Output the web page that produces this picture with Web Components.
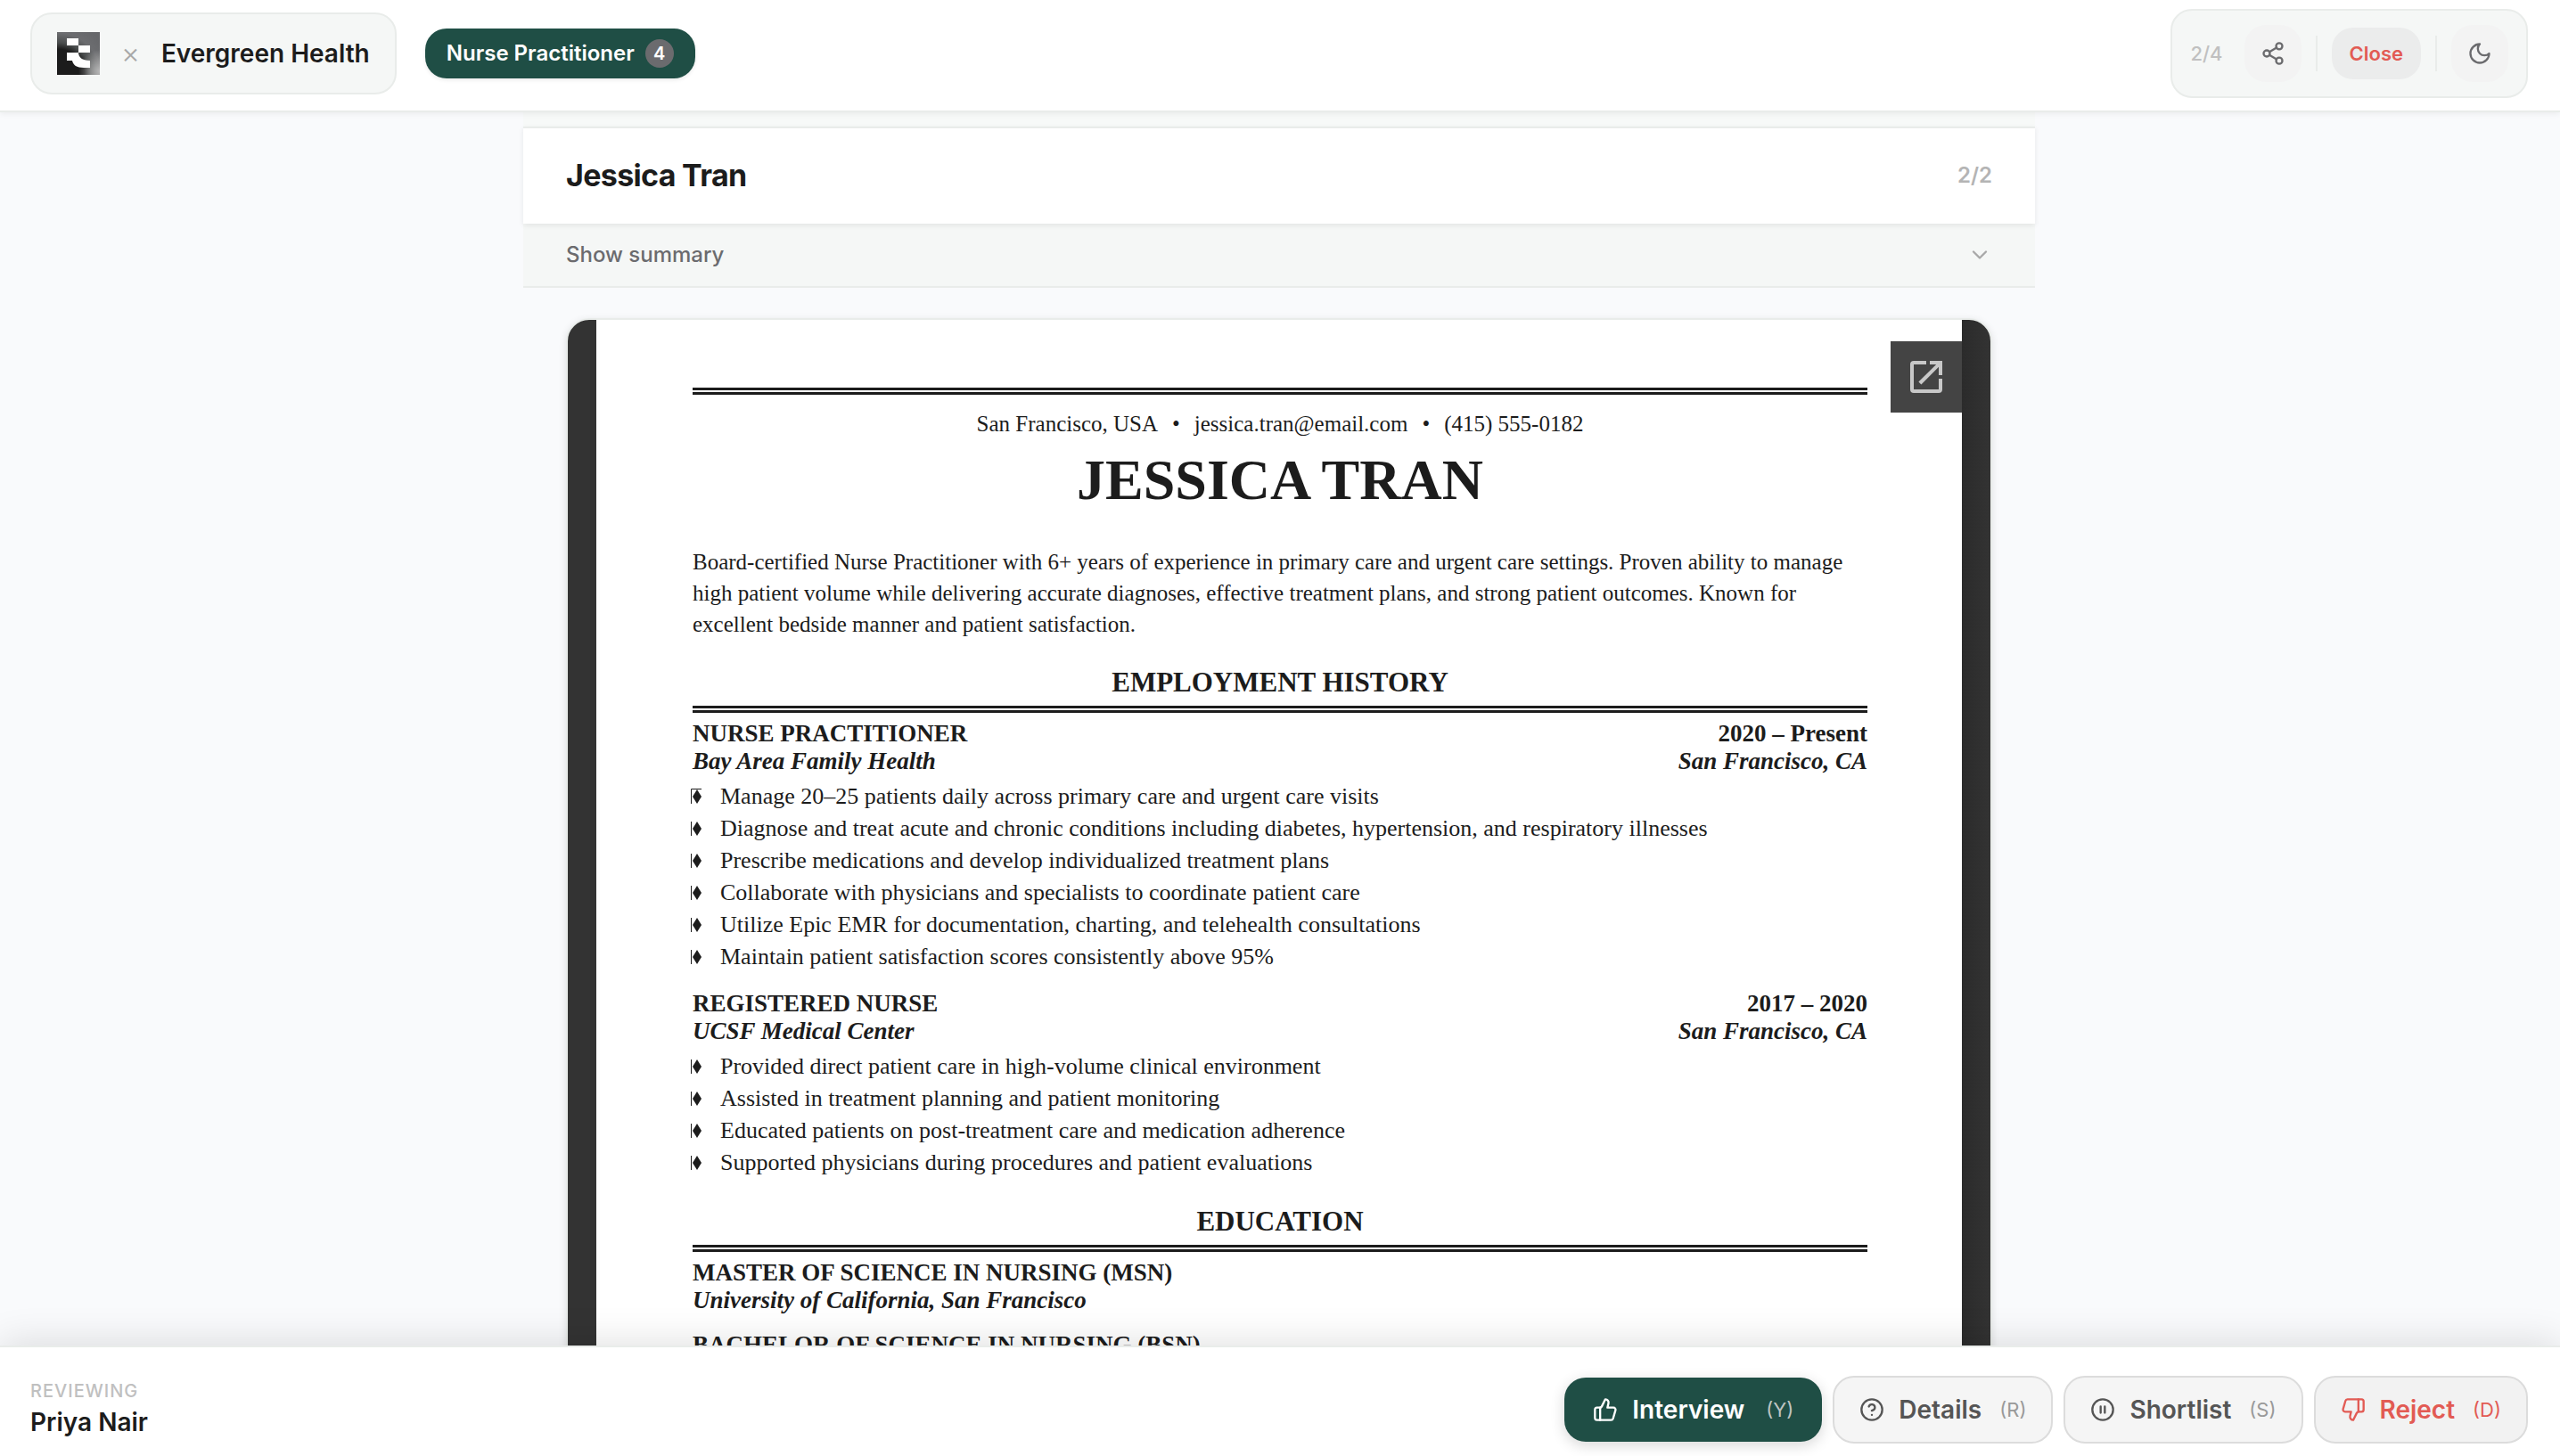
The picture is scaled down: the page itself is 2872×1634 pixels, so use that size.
<!DOCTYPE html>
<html lang="en">
<head>
<meta charset="utf-8">
<title>Evergreen Health – Nurse Practitioner</title>
<style>
  html, body { margin: 0; height: 100%; }
  body {
    font-family: Inter, "Liberation Sans", sans-serif;
    color: #1c1c1c;
    background: #f9fafc;
    --ink: #1c1c1c;
    --green: #1f4e45;
    --red: #e25b54;
    --muted: #c0c0c0;
    --surface: #f5f7f6;
    --line: #e9ecea;
  }
</style>
</head>
<body>
<review-app></review-app>

<script>
const ICONS = {
  share: '<circle cx="18" cy="5" r="3"/><circle cx="6" cy="12" r="3"/><circle cx="18" cy="19" r="3"/><path d="M8.59 13.51l6.83 3.98M15.41 6.51l-6.82 3.98"/>',
  moon: '<path d="M12 3a6 6 0 0 0 9 9 9 9 0 1 1-9-9Z"/>',
  chevron: '<path d="m6 9 6 6 6-6"/>',
  up: '<path d="M7 10v12"/><path d="M15 5.88 14 10h5.83a2 2 0 0 1 1.92 2.56l-2.33 8A2 2 0 0 1 17.5 22H4a2 2 0 0 1-2-2v-8a2 2 0 0 1 2-2h2.76a2 2 0 0 0 1.79-1.11L12 2a3.13 3.13 0 0 1 3 3.88Z"/>',
  down: '<path d="M17 14V2"/><path d="M9 18.12 10 14H4.17a2 2 0 0 1-1.92-2.56l2.33-8A2 2 0 0 1 6.5 2H20a2 2 0 0 1 2 2v8a2 2 0 0 1-2 2h-2.76a2 2 0 0 0-1.79 1.11L12 22a3.13 3.13 0 0 1-3-3.88Z"/>',
  help: '<circle cx="12" cy="12" r="10"/><path d="M9.09 9a3 3 0 0 1 5.83 1c0 2-3 3-3 3M12 17h.01"/>',
  pause: '<circle cx="12" cy="12" r="10"/><path d="M10 15V9M14 15V9"/>'
};

function define(name, html, setup) {
  const template = document.createElement('template');
  template.innerHTML = html;
  customElements.define(name, class extends HTMLElement {
    connectedCallback() {
      if (this.shadowRoot) return;
      const root = this.attachShadow({ mode: 'open' });
      root.append(template.content.cloneNode(true));
      if (setup) setup(this, root);
    }
  });
}

define('line-icon', `
  <style>
    :host { display: block; flex: none; width: 28px; height: 28px; }
    svg { display: block; width: 100%; height: 100%; fill: none; stroke: currentColor; stroke-width: 2; stroke-linecap: round; stroke-linejoin: round; }
  </style>
  <svg viewBox="0 0 24 24" aria-hidden="true"></svg>`,
  (host, root) => { root.querySelector('svg').innerHTML = ICONS[host.getAttribute('name')]; });

define('brand-card', `
  <style>
    :host { display: flex; align-items: center; gap: 24px; box-sizing: border-box; height: 92px; padding: 0 28px; border: 2px solid var(--line); border-radius: 24px; background: var(--surface); }
    svg { display: block; width: 48px; height: 48px; }
    .times { font-size: 32px; line-height: 32px; font-weight: 300; color: #a8a8a8; }
    .name { font-size: 28px; line-height: 36px; font-weight: 600; }
  </style>
  <svg viewBox="0 0 48 48" aria-hidden="true">
    <defs>
      <radialGradient id="glow" gradientUnits="userSpaceOnUse" cx="2" cy="48" r="60">
        <stop offset="0" stop-color="#1c1c1c"/><stop offset=".48" stop-color="#1c1c1c"/><stop offset=".6" stop-color="#4a4d4d"/><stop offset=".78" stop-color="#6c6d70"/><stop offset="1" stop-color="#66676a"/>
      </radialGradient>
      <radialGradient id="shine" gradientUnits="userSpaceOnUse" cx="48" cy="44" r="24">
        <stop offset="0" stop-color="#b8b8b8"/><stop offset="1" stop-color="#b8b8b8" stop-opacity="0"/>
      </radialGradient>
    </defs>
    <path fill="url(#glow)" d="M0 0h48v48H0z"/>
    <path fill="url(#shine)" d="M0 0h48v48H0z"/>
    <path fill="#fff" d="M11 7h13v8H11zM24 15h13v8H24zM11 23h13c0 5 4 9 13 9v8h-7c-8 0-12-3-13-8h-6z"/>
  </svg>
  <span class="times">×</span>
  <span class="name"><slot></slot></span>`);

define('role-pill', `
  <style>
    :host { display: block; }
    button { display: flex; align-items: center; gap: 12px; box-sizing: border-box; height: 56px; margin: 0; padding: 0 24px; border: 0; border-radius: 24px; background: var(--green); color: #fff; font: 600 24px/32px Inter, sans-serif; box-shadow: 0 2px 4px rgba(0,0,0,.08); }
    .count { width: 32px; border-radius: 16px; background: #6b6b6e; font-size: 20px; text-align: center; }
  </style>
  <button type="button"><slot></slot><span class="count"><slot name="count"></slot></span></button>`);

define('top-tools', `
  <style>
    :host { display: flex; align-items: center; gap: 16px; box-sizing: border-box; height: 100px; padding: 0 20px; border: 2px solid var(--line); border-radius: 24px; background: var(--surface); }
    .page { padding-right: 8px; font-size: 22px; line-height: 28px; font-weight: 500; color: var(--muted); }
    button { display: grid; place-items: center; box-sizing: border-box; margin: 0; padding: 0; border: 0; border-radius: 24px; }
    .icon { width: 64px; height: 64px; background: #f3f3f3; color: #6b6b6e; }
    .close { height: 58px; padding: 0 20px; background: #ebecec; color: var(--red); font: 600 22px/28px Inter, sans-serif; }
    .rule { width: 2px; height: 40px; background: var(--line); }
  </style>
  <span class="page">2/4</span>
  <button class="icon" type="button" aria-label="Share"><line-icon name="share"></line-icon></button>
  <span class="rule"></span>
  <button class="close" type="button">Close</button>
  <span class="rule"></span>
  <button class="icon" type="button" aria-label="Dark mode"><line-icon name="moon"></line-icon></button>`);

define('candidate-header', `
  <style>
    :host { display: block; padding-top: 16px; background: #f7f9f8; }
    .title { position: relative; display: flex; align-items: center; justify-content: space-between; box-sizing: border-box; height: 109px; padding: 0 48px; border-top: 2px solid var(--line); background: #fff; box-shadow: 0 2px 6px rgba(0,0,0,.08); }
    h1 { margin: 0; padding-bottom: 2px; font-size: 34px; line-height: 44px; font-weight: 700; letter-spacing: -0.02em; }
    .page { padding-bottom: 2px; font-size: 24px; line-height: 32px; font-weight: 600; color: #b4b4b4; }
    button { display: flex; align-items: center; justify-content: space-between; box-sizing: border-box; width: 100%; height: 72px; margin: 0; padding: 0 48px; border: 0; border-bottom: 2px solid var(--line); background: var(--surface); color: #6b6b6e; font: 500 24px/32px Inter, sans-serif; }
    line-icon { color: #a8a8a8; }
  </style>
  <div class="title"><h1><slot></slot></h1><span class="page">2/2</span></div>
  <button type="button" aria-expanded="false">Show summary<line-icon name="chevron"></line-icon></button>`);

define('document-viewer', `
  <style>
    :host { position: relative; display: block; box-sizing: border-box; padding: 0 32px; border: 2px solid var(--line); border-radius: 26px; overflow: hidden; background: linear-gradient(to left, #333, #2b2b2b 32px, #333 32px); box-shadow: 0 2px 8px rgba(0,0,0,.1); }
    button { position: absolute; top: 24px; right: 32px; display: grid; place-items: center; width: 80px; height: 80px; margin: 0; padding: 0; border: 0; background: #444; color: #c8c8c8; }
    svg { display: block; width: 48px; height: 48px; fill: currentColor; }
  </style>
  <slot></slot>
  <button type="button" aria-label="Open in a new window">
    <svg viewBox="0 0 24 24" aria-hidden="true"><path d="M12 3v2H5v14h14v-6h2v6a2 2 0 0 1-2 2H5a2 2 0 0 1-2-2V5a2 2 0 0 1 2-2h7zM14 3h7v8h-2V6.4l-9.8 9.9-1.5-1.5L17.6 5H14V3z"/></svg>
  </button>`);

define('resume-page', `
  <style>
    :host { display: block; padding: 76px 106px 76px 108px; background: #fff; color: var(--ink); font: 26px/36px "Liberation Serif", serif; }
    hr { margin: 0; border: 0; border-top: 8px double var(--ink); }
    .contact { display: flex; justify-content: center; gap: 16px; margin-top: 15px; font-size: 25px; }
    h2 { margin: 7px 0 36px; font-size: 64px; line-height: 76px; font-weight: 700; text-align: center; }
    p { margin: 0; font-size: 25px; line-height: 35px; }
  </style>
  <hr>
  <div class="contact"><span>San Francisco, USA</span><span>•</span><span>jessica.tran@email.com</span><span>•</span><span>(415) 555-0182</span></div>
  <h2>JESSICA TRAN</h2>
  <p><slot name="summary"></slot></p>
  <slot></slot>`);

define('resume-section', `
  <style>
    :host { display: block; margin-top: 30px; }
    h3 { margin: 0 0 8px; font-size: 31px; line-height: 36px; font-weight: 700; text-align: center; }
    hr { margin: 0 0 8px; border: 0; border-top: 8px double var(--ink); }
    .entries { display: flex; flex-direction: column; gap: 19px; }
  </style>
  <h3></h3><hr><div class="entries"><slot></slot></div>`,
  (host, root) => { root.querySelector('h3').textContent = host.getAttribute('heading'); });

define('resume-entry', `
  <style>
    :host { display: block; }
    .row { display: flex; justify-content: space-between; font-size: 27px; line-height: 31px; font-weight: 700; }
    .place { font-style: italic; }
    ul { margin: 6px 0 0; padding: 0; list-style: none; }
    ul:empty { display: none; }
    li { display: flex; align-items: center; gap: 19px; }
    svg { display: block; flex: none; width: 12px; height: 18px; overflow: visible; }
  </style>
  <div class="row"><span class="role"></span><span class="dates"></span></div>
  <div class="row place"><span class="org"></span><span class="where"></span></div>
  <ul></ul>`,
  (host, root) => {
    for (const key of ['role', 'dates', 'org', 'where'])
      root.querySelector('.' + key).textContent = host.getAttribute(key) || '';
    const list = root.querySelector('ul');
    [...host.children].forEach((child, i) => {
      const item = document.createElement('li');
      const first = i === 0 && host.hasAttribute('first');
      item.innerHTML = '<svg viewBox="0 0 12 18" aria-hidden="true"><path fill="none" stroke="#1c1c1c" d="' +
        (first ? 'M10 .5H-1.500V17' : 'M-1.500 1V17') + '"/><path fill="#1c1c1c" d="M5 1L10 9 5 17 0 9z"/></svg><span></span>';
      item.querySelector('span').textContent = child.textContent;
      list.append(item);
    });
  });

define('action-button', `
  <style>
    :host { display: block; }
    button { display: flex; align-items: center; gap: 16px; box-sizing: border-box; height: 76px; margin: 0; padding: 0 28px; border: 2px solid #dcdcdc; border-radius: 24px; background: #f5f5f5; color: #555; font: 600 28px/36px Inter, sans-serif; }
    .key { margin-left: 4px; font-size: 22px; line-height: 28px; font-weight: 400; color: #999; }
    :host([kind="primary"]) button { height: 72px; padding: 0 32px; border: 0; background: var(--green); color: #fff; box-shadow: 0 4px 16px rgba(0,0,0,.16); }
    :host([kind="primary"]) .key { margin-left: 8px; color: #bfc5c2; }
    :host([kind="danger"]) button { background: #f2f2f2; color: var(--red); }
    :host([kind="danger"]) .key { color: var(--red); }
  </style>
  <button type="button"><line-icon></line-icon><slot></slot><span class="key"></span></button>`,
  (host, root) => {
    root.querySelector('.key').textContent = '(' + host.getAttribute('shortcut') + ')';
    const icon = document.createElement('line-icon');
    icon.setAttribute('name', host.getAttribute('icon'));
    root.querySelector('line-icon').replaceWith(icon);
  });

define('review-app', `
  <style>
    :host { display: flex; flex-direction: column; height: 100vh; overflow: hidden; }
    header { position: relative; z-index: 2; display: flex; align-items: center; flex: none; gap: 32px; box-sizing: border-box; height: 126px; padding: 0 36px 4px 34px; border-bottom: 2px solid var(--line); background: #fff; box-shadow: 0 2px 6px rgba(0,0,0,.06); }
    top-tools { margin-left: auto; }
    main { flex: 1; min-height: 0; padding-right: 2px; overflow: hidden; background: #f9fafc; }
    .column { max-width: 1696px; margin: 0 auto; }
    document-viewer { margin: 34px 48px; }
    footer { position: relative; z-index: 2; display: flex; align-items: center; flex: none; gap: 12px; box-sizing: border-box; height: 124px; padding: 18px 36px 0 34px; border-top: 2px solid var(--line); background: #fff; box-shadow: 0 -4px 40px rgba(0,0,0,.12); }
    .who { margin-right: auto; padding-bottom: 2px; }
    .who p { margin: 0; font-size: 20px; line-height: 26px; font-weight: 500; letter-spacing: 0.05em; color: var(--muted); }
    .who strong { display: block; margin-top: 4px; font-size: 28px; line-height: 36px; font-weight: 600; }
  </style>
  <header>
    <brand-card>Evergreen Health</brand-card>
    <role-pill>Nurse Practitioner<span slot="count">4</span></role-pill>
    <top-tools></top-tools>
  </header>
  <main>
    <div class="column">
      <candidate-header>Jessica Tran</candidate-header>
      <document-viewer>
        <resume-page>
          <span slot="summary">Board-certified Nurse Practitioner with 6+ years of experience in primary care and urgent care settings. Proven ability to manage high patient volume while delivering accurate diagnoses, effective treatment plans, and strong patient outcomes. Known for excellent bedside manner and patient satisfaction.</span>
          <resume-section heading="EMPLOYMENT HISTORY">
            <resume-entry first role="NURSE PRACTITIONER" dates="2020 – Present" org="Bay Area Family Health" where="San Francisco, CA">
              <span>Manage 20–25 patients daily across primary care and urgent care visits</span>
              <span>Diagnose and treat acute and chronic conditions including diabetes, hypertension, and respiratory illnesses</span>
              <span>Prescribe medications and develop individualized treatment plans</span>
              <span>Collaborate with physicians and specialists to coordinate patient care</span>
              <span>Utilize Epic EMR for documentation, charting, and telehealth consultations</span>
              <span>Maintain patient satisfaction scores consistently above 95%</span>
            </resume-entry>
            <resume-entry role="REGISTERED NURSE" dates="2017 – 2020" org="UCSF Medical Center" where="San Francisco, CA">
              <span>Provided direct patient care in high-volume clinical environment</span>
              <span>Assisted in treatment planning and patient monitoring</span>
              <span>Educated patients on post-treatment care and medication adherence</span>
              <span>Supported physicians during procedures and patient evaluations</span>
            </resume-entry>
          </resume-section>
          <resume-section heading="EDUCATION">
            <resume-entry role="MASTER OF SCIENCE IN NURSING (MSN)" org="University of California, San Francisco"></resume-entry>
            <resume-entry role="BACHELOR OF SCIENCE IN NURSING (BSN)"></resume-entry>
          </resume-section>
        </resume-page>
      </document-viewer>
    </div>
  </main>
  <footer>
    <div class="who"><p>REVIEWING</p><strong>Priya Nair</strong></div>
    <action-button kind="primary" icon="up" shortcut="Y">Interview</action-button>
    <action-button icon="help" shortcut="R">Details</action-button>
    <action-button icon="pause" shortcut="S">Shortlist</action-button>
    <action-button kind="danger" icon="down" shortcut="D">Reject</action-button>
  </footer>`);
</script>
</body>
</html>
